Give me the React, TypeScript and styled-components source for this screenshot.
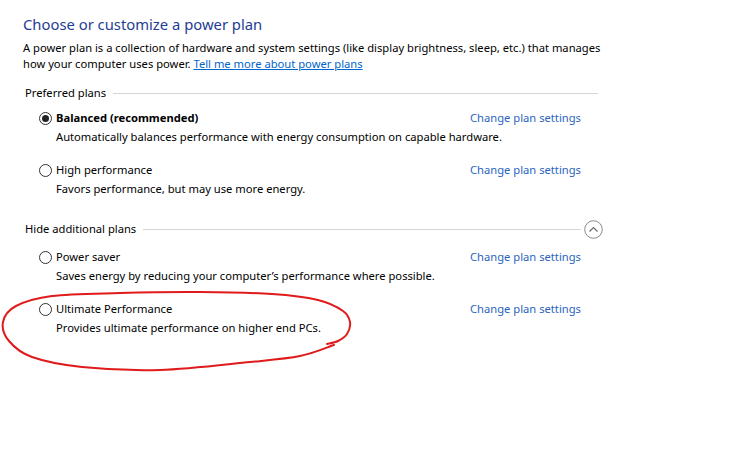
import React from "react";
import styled, { createGlobalStyle } from "styled-components";

const Global = createGlobalStyle`
  html, body { margin: 0; padding: 0; background: #fff; }
  body { font-family: "Segoe UI", "Noto Sans", sans-serif; color: #000; }
`;

const Page = styled.div`
  position: relative;
  width: 755px;
  height: 473px;
  box-sizing: border-box;
  padding: 14px 0 0 23px;
  overflow: hidden;
`;

const Title = styled.h1`
  margin: 0;
  font-weight: normal;
  font-size: 14.8px;
  line-height: 20px;
  color: #1f3d95;
`;

const Intro = styled.p`
  margin: 6px 0 0;
  font-size: 11.2px;
  line-height: 16px;
  white-space: nowrap;
`;

const Link = styled.a`
  color: #0066cc;
  text-decoration: underline;
  cursor: pointer;
`;

const SectionHeader = styled.div<{ $mt: number; $width: number }>`
  display: flex;
  align-items: center;
  height: 16px;
  width: ${(p) => p.$width}px;
  margin-top: ${(p) => p.$mt}px;
  padding-left: 2px;
  box-sizing: border-box;
  gap: 7px;
  font-size: 11.2px;
  line-height: 16px;
  white-space: nowrap;
`;

const Rule = styled.div`
  flex: 1;
  height: 1px;
  background: #d5d5d5;
`;

const ChevronButton = styled.span`
  flex: none;
  width: 19px;
  height: 19px;
  margin-left: -4px;
  display: inline-flex;
`;

const Plan = styled.div<{ $mt: number }>`
  display: grid;
  grid-template-columns: 431px auto;
  row-gap: 3px;
  margin-top: ${(p) => p.$mt}px;
  padding-left: 16px;
  font-size: 11.2px;
  line-height: 16px;
  white-space: nowrap;
`;

const PlanLabel = styled.label<{ $bold?: boolean }>`
  display: flex;
  align-items: center;
  gap: 4px;
  font-weight: ${(p) => (p.$bold ? 700 : 400)};
`;

const Radio = styled.span<{ $checked: boolean }>`
  width: 13px;
  height: 13px;
  border-radius: 50%;
  border: 1px solid #333;
  box-sizing: border-box;
  display: inline-flex;
  align-items: center;
  justify-content: center;
  &::after {
    content: "";
    width: 7px;
    height: 7px;
    border-radius: 50%;
    background: #222;
    display: ${(p) => (p.$checked ? "block" : "none")};
  }
`;

const PlanLink = styled.a`
  color: #2a64c0;
  cursor: pointer;
`;

const PlanDesc = styled.div`
  grid-column: 1 / span 2;
  padding-left: 17px;
`;

const Annotation = styled.svg`
  position: absolute;
  left: 0;
  top: 0;
  pointer-events: none;
`;

function smoothPath(pts: [number, number][]): string {
  let d = `M ${pts[0][0]} ${pts[0][1]}`;
  for (let i = 0; i < pts.length - 1; i++) {
    const p0 = pts[i - 1] || pts[i];
    const p1 = pts[i];
    const p2 = pts[i + 1];
    const p3 = pts[i + 2] || p2;
    const c1x = p1[0] + (p2[0] - p0[0]) / 6;
    const c1y = p1[1] + (p2[1] - p0[1]) / 6;
    const c2x = p2[0] - (p3[0] - p1[0]) / 6;
    const c2y = p2[1] - (p3[1] - p1[1]) / 6;
    d += ` C ${c1x.toFixed(1)} ${c1y.toFixed(1)} ${c2x.toFixed(1)} ${c2y.toFixed(1)} ${p2[0]} ${p2[1]}`;
  }
  return d;
}

const ellipsePts: [number, number][] = [
  [327, 344],
  [338, 341],
  [347, 334],
  [350, 322],
  [343, 311],
  [318, 300],
  [272, 294],
  [200, 292],
  [120, 293],
  [52, 296],
  [16, 306],
  [3, 322],
  [9, 341],
  [32, 357],
  [82, 367],
  [160, 370],
  [250, 362],
  [300, 356],
  [334, 345],
];

type PlanData = {
  name: string;
  desc: string;
  checked?: boolean;
  mt: number;
};

const preferred: PlanData[] = [
  {
    name: "Balanced (recommended)",
    desc: "Automatically balances performance with energy consumption on capable hardware.",
    checked: true,
    mt: 9,
  },
  {
    name: "High performance",
    desc: "Favors performance, but may use more energy.",
    mt: 17,
  },
];

const additional: PlanData[] = [
  {
    name: "Power saver",
    desc: "Saves energy by reducing your computer\u2019s performance where possible.",
    mt: 12,
  },
  {
    name: "Ultimate Performance",
    desc: "Provides ultimate performance on higher end PCs.",
    mt: 17,
  },
];

function PlanRow({ plan }: { plan: PlanData }) {
  return (
    <Plan $mt={plan.mt}>
      <PlanLabel $bold={plan.checked}>
        <Radio $checked={!!plan.checked} />
        {plan.name}
      </PlanLabel>
      <PlanLink>Change plan settings</PlanLink>
      <PlanDesc>{plan.desc}</PlanDesc>
    </Plan>
  );
}

export default function App() {
  return (
    <>
      <Global />
      <Page>
        <Title>Choose or customize a power plan</Title>
        <Intro>
          A power plan is a collection of hardware and system settings (like display brightness, sleep, etc.) that manages
          <br />
          how your computer uses power. <Link>Tell me more about power plans</Link>
        </Intro>
        <SectionHeader $mt={13} $width={575}>
          Preferred plans
          <Rule />
        </SectionHeader>
        {preferred.map((p) => (
          <PlanRow key={p.name} plan={p} />
        ))}
        <SectionHeader $mt={24} $width={580}>
          Hide additional plans
          <Rule />
          <ChevronButton>
            <svg width="19" height="19" viewBox="0 0 19 19">
              <circle cx="9.5" cy="9.5" r="8.8" fill="none" stroke="#8a8a8a" strokeWidth="1" />
              <path d="M5.5 11.5 L9.5 7.5 L13.5 11.5" fill="none" stroke="#6a6a6a" strokeWidth="1.2" />
            </svg>
          </ChevronButton>
        </SectionHeader>
        {additional.map((p) => (
          <PlanRow key={p.name} plan={p} />
        ))}
        <Annotation width="755" height="473" viewBox="0 0 755 473">
          <path d={smoothPath(ellipsePts)} fill="none" stroke="#e01b1b" strokeWidth="2" strokeLinecap="round" strokeLinejoin="round" />
        </Annotation>
      </Page>
    </>
  );
}
